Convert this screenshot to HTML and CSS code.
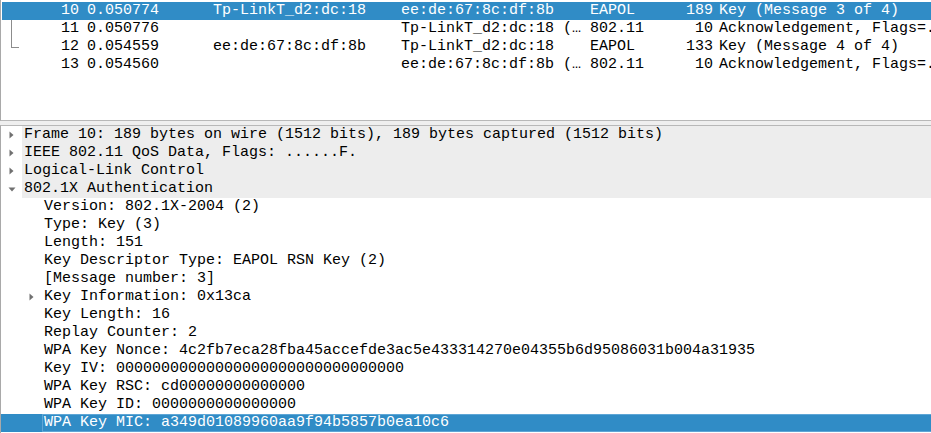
FILE: index.html
```html
<!DOCTYPE html>
<html>
<head>
<meta charset="utf-8">
<link rel="stylesheet" href="styles.css">
</head>
<body>
<div class="list">
  <div class="prow sel">
    <span class="c num">10</span><span class="c time">0.050774</span><span class="c src">Tp-LinkT_d2:dc:18</span><span class="c dst">ee:de:67:8c:df:8b</span><span class="c proto">EAPOL</span><span class="c len">189</span><span class="c info">Key (Message 3 of 4)</span>
  </div>
  <div class="prow">
    <span class="c num rel-mid">11</span><span class="c time">0.050776</span><span class="c src"></span><span class="c dst">Tp-LinkT_d2:dc:18 (…</span><span class="c proto">802.11</span><span class="c len">10</span><span class="c info">Acknowledgement, Flags=........</span>
  </div>
  <div class="prow">
    <span class="c num rel-end">12</span><span class="c time">0.054559</span><span class="c src">ee:de:67:8c:df:8b</span><span class="c dst">Tp-LinkT_d2:dc:18</span><span class="c proto">EAPOL</span><span class="c len">133</span><span class="c info">Key (Message 4 of 4)</span>
  </div>
  <div class="prow">
    <span class="c num">13</span><span class="c time">0.054560</span><span class="c src"></span><span class="c dst">ee:de:67:8c:df:8b (…</span><span class="c proto">802.11</span><span class="c len">10</span><span class="c info">Acknowledgement, Flags=........</span>
  </div>
</div>
<div class="splitter"></div>
<div class="tree">
  <div class="trow top"><span class="tw"><svg width="5" height="8" viewBox="0 0 5 8"><path d="M0.5 0.5 L4.5 4 L0.5 7.5 Z" fill="#707070"/></svg></span><span class="tx">Frame 10: 189 bytes on wire (1512 bits), 189 bytes captured (1512 bits)</span></div>
  <div class="trow top"><span class="tw"><svg width="5" height="8" viewBox="0 0 5 8"><path d="M0.5 0.5 L4.5 4 L0.5 7.5 Z" fill="#707070"/></svg></span><span class="tx">IEEE 802.11 QoS Data, Flags: ......F.</span></div>
  <div class="trow top"><span class="tw"><svg width="5" height="8" viewBox="0 0 5 8"><path d="M0.5 0.5 L4.5 4 L0.5 7.5 Z" fill="#707070"/></svg></span><span class="tx">Logical-Link Control</span></div>
  <div class="trow top"><span class="tw down"><svg width="8" height="5" viewBox="0 0 8 5"><path d="M0.5 0.5 L7.5 0.5 L4 4.5 Z" fill="#707070"/></svg></span><span class="tx">802.1X Authentication</span></div>
  <div class="trow l1"><span class="tw"></span><span class="tx">Version: 802.1X-2004 (2)</span></div>
  <div class="trow l1"><span class="tw"></span><span class="tx">Type: Key (3)</span></div>
  <div class="trow l1"><span class="tw"></span><span class="tx">Length: 151</span></div>
  <div class="trow l1"><span class="tw"></span><span class="tx">Key Descriptor Type: EAPOL RSN Key (2)</span></div>
  <div class="trow l1"><span class="tw"></span><span class="tx">[Message number: 3]</span></div>
  <div class="trow l1"><span class="tw"><svg width="5" height="8" viewBox="0 0 5 8"><path d="M0.5 0.5 L4.5 4 L0.5 7.5 Z" fill="#707070"/></svg></span><span class="tx">Key Information: 0x13ca</span></div>
  <div class="trow l1"><span class="tw"></span><span class="tx">Key Length: 16</span></div>
  <div class="trow l1"><span class="tw"></span><span class="tx">Replay Counter: 2</span></div>
  <div class="trow l1"><span class="tw"></span><span class="tx">WPA Key Nonce: 4c2fb7eca28fba45accefde3ac5e433314270e04355b6d95086031b004a31935</span></div>
  <div class="trow l1"><span class="tw"></span><span class="tx">Key IV: 00000000000000000000000000000000</span></div>
  <div class="trow l1"><span class="tw"></span><span class="tx">WPA Key RSC: cd00000000000000</span></div>
  <div class="trow l1"><span class="tw"></span><span class="tx">WPA Key ID: 0000000000000000</span></div>
  <div class="trow l1 sel"><span class="tw"></span><span class="tx focus">WPA Key MIC: a349d01089960aa9f94b5857b0ea10c6</span></div>
</div>
</body>
</html>
```
FILE: styles.css
```css
html, body {
  margin: 0;
  padding: 0;
  background: #ffffff;
}
body {
  width: 931px;
  height: 433px;
  overflow: hidden;
  font-family: "Liberation Mono", monospace;
  font-size: 15px;
  color: #000000;
}
.list {
  height: 118px;
  padding-top: 2px;
  border-left: 1px solid #a9a9a9;
  border-bottom: 1px solid #b8b8b8;
  overflow: hidden;
}
.prow {
  display: flex;
  height: 18px;
  line-height: 18px;
  white-space: nowrap;
  margin-left: 1px;
}
.prow.sel {
  background: #308cc6;
  color: #ffffff;
}
.c {
  display: block;
  overflow: hidden;
  flex: none;
}
.num {
  width: 77px;
  text-align: right;
  padding-right: 2px;
  position: relative;
}
.time { width: 120px; padding-left: 6px; }
.src { width: 182px; padding-left: 6px; }
.dst { width: 183px; padding-left: 6px; }
.proto { width: 71px; padding-left: 6px; }
.len { width: 52px; text-align: right; padding-right: 2px; }
.info { padding-left: 4px; flex: 1; overflow: visible; }
.rel-mid::before {
  content: "";
  position: absolute;
  left: 9px;
  top: 0;
  height: 18px;
  border-left: 1px solid #8c8c8c;
}
.rel-end::before {
  content: "";
  position: absolute;
  left: 9px;
  top: 0;
  width: 7px;
  height: 9px;
  border-left: 1px solid #8c8c8c;
  border-bottom: 1px solid #8c8c8c;
}
.splitter {
  height: 4px;
  background: #efefef;
}
.tree {
  border-top: 1px solid #b8b8b8;
  border-left: 1px solid #a9a9a9;
  height: 400px;
}
.trow {
  display: flex;
  height: 18px;
  line-height: 18px;
  white-space: nowrap;
  padding-left: 3px;
}
.trow.l1 { padding-left: 23px; }
.tw {
  width: 18px;
  flex: none;
  display: flex;
  align-items: center;
  padding-left: 5px;
  box-sizing: border-box;
}
.tw.down { padding-left: 4px; }
.tx {
  flex: 1;
  padding-left: 2px;
}
.trow.top .tx { background: #ededed; }
.trow.sel {
  background: #308cc6;
  color: #ffffff;
}
.tx.focus {
  box-shadow: inset 1px 1px 0 #5ea6d6, inset 0 -1px 0 #5ea6d6;
}
```
